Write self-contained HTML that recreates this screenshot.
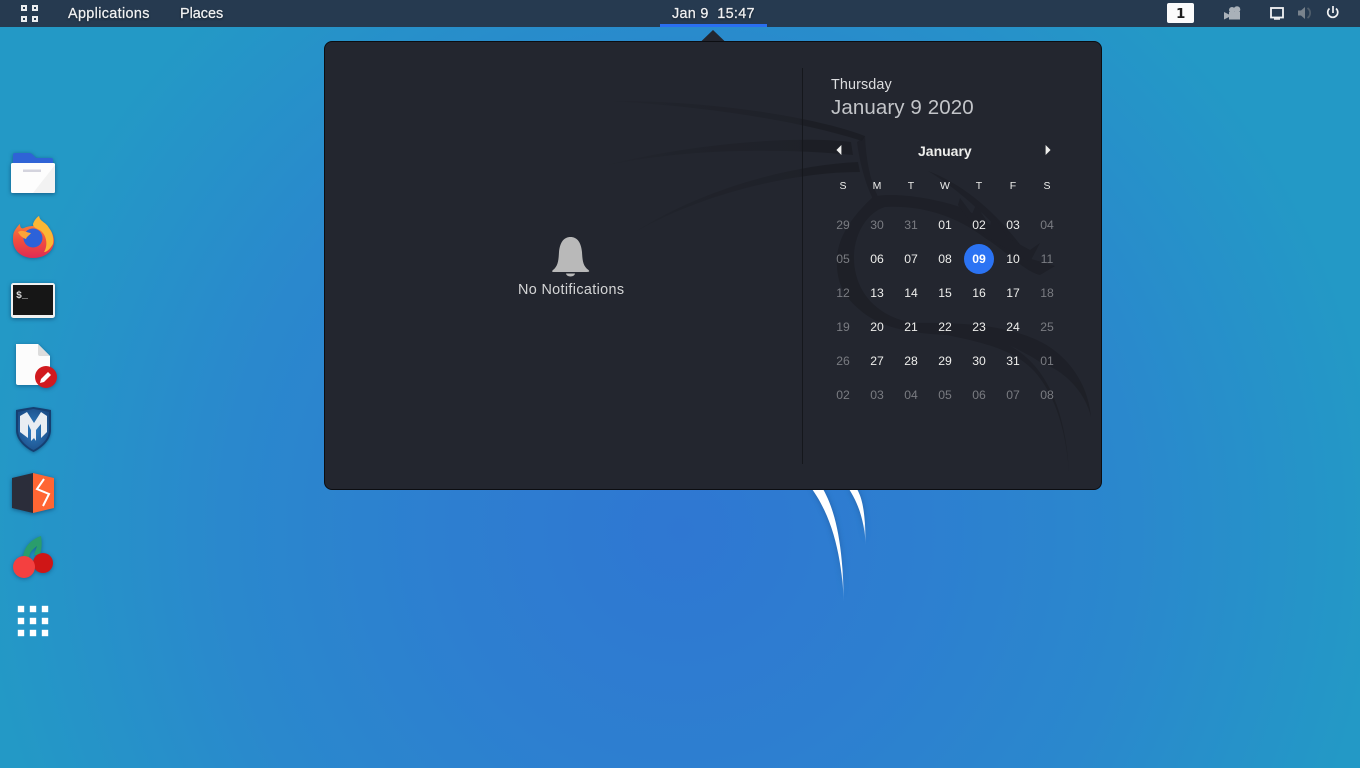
<!DOCTYPE html>
<html><head><meta charset="utf-8"><style>
html,body{margin:0;padding:0;width:1360px;height:768px;overflow:hidden}
body{position:relative;font-family:"Liberation Sans",sans-serif;background:radial-gradient(ellipse 700px 700px at 680px 530px,#2f77d2 0%,#2d7fd0 35%,#2a88cd 65%,#2399c6 100%) #2399c6}
.t{position:absolute;white-space:nowrap;line-height:1}
.c{position:absolute;transform:translate(-50%,-50%);font-size:12.2px;line-height:1;color:#eeeeec;white-space:nowrap}
.o{color:#7a7c82}
#bar{position:absolute;left:0;top:0;width:1360px;height:27px;background:#263a50}
.bt{color:#f0f1f2;font-size:14.4px;font-weight:400;text-shadow:0 1px 2px rgba(0,0,0,.6);-webkit-text-stroke:.25px #f0f1f2}
#panel{position:absolute;left:324px;top:41px;width:776px;height:447px;background:#23262f;border:1px solid #0c0d11;border-radius:8px;overflow:hidden}
svg{position:absolute;left:0;top:0;overflow:visible}
</style></head><body>

<svg width="1360" height="768" style="filter:drop-shadow(0 0 3px rgba(20,60,110,.4))">
<defs>
<linearGradient id="c1" gradientUnits="userSpaceOnUse" x1="0" y1="489" x2="0" y2="604"><stop offset="0" stop-color="#fff"/><stop offset=".72" stop-color="#fff"/><stop offset="1" stop-color="#fff" stop-opacity="0"/></linearGradient>
<linearGradient id="c2" gradientUnits="userSpaceOnUse" x1="0" y1="489" x2="0" y2="546"><stop offset="0" stop-color="#fff"/><stop offset=".6" stop-color="#fff"/><stop offset="1" stop-color="#fff" stop-opacity="0"/></linearGradient>
</defs>
<path d="M812 489H823C836 512 843 545 844 604C842 560 834 520 812 489Z" fill="url(#c1)"/>
<path d="M849 489H857C863 500 865 512 866 546C864 520 859 505 849 489Z" fill="url(#c2)"/>
</svg>

<div id="bar"></div>
<svg width="1360" height="27">
<g fill="none" stroke="#eceef0" stroke-width="2"><rect x="22" y="6" width="4" height="4"/><rect x="33" y="6" width="4" height="4"/><rect x="22" y="17" width="4" height="4"/><rect x="33" y="17" width="4" height="4"/></g>
<rect x="660" y="24" width="107" height="3" fill="#2a6ff0"/>
<rect x="1167" y="3" width="27" height="20" rx="2" fill="#fbfbfb"/>
<path d="M1224 12l5 2.500V12h11v7.500H1229V17l-5 2.500Z" fill="#a9b1b9"/><circle cx="1232" cy="10" r="3" fill="#a9b1b9"/><circle cx="1237" cy="9.500" r="3.300" fill="#a9b1b9"/>
<rect x="1271" y="8" width="12" height="9.500" fill="none" stroke="#f2f3f4" stroke-width="1.800"/><path d="M1274 19h6" stroke="#f2f3f4" stroke-width="1.500"/>
<path d="M1298 10.500h3l4-3.500v12l-4-3.500h-3Z" fill="#79838d"/><path d="M1307.500 8c3.500 2.500 3.500 7.500 0 10" fill="none" stroke="#4f5d6b" stroke-width="1.800"/>
<path d="M1329.500 8.500a5 5 0 1 0 6.500 0" fill="none" stroke="#f2f3f4" stroke-width="1.700"/><path d="M1333 6v7" stroke="#f2f3f4" stroke-width="1.700"/>
</svg>
<span class="t bt" style="left:68px;top:7px;letter-spacing:.35px">Applications</span>
<span class="t bt" style="left:180px;top:7px">Places</span>
<span class="t bt" style="left:672px;top:7px;letter-spacing:.3px">Jan 9&nbsp; 15:47</span>
<span class="t" style="left:1176px;top:7.500px;font-family:'DejaVu Sans',sans-serif;font-weight:700;font-size:13.500px;color:#1c1c1c">1</span>

<svg width="1360" height="60" style="left:0;top:0"><path d="M701 41.500L713 30L725 41.500Z" fill="#23262f"/></svg>
<div id="panel">
<svg width="776" height="447" style="left:-325px;top:-42px">
<defs>
<linearGradient id="w" gradientUnits="userSpaceOnUse" x1="600" y1="0" x2="866" y2="0"><stop offset="0" stop-color="#191b21" stop-opacity=".05"/><stop offset=".3" stop-color="#191b21" stop-opacity=".28"/><stop offset=".75" stop-color="#191b21" stop-opacity=".42"/><stop offset=".76" stop-color="#191b21" stop-opacity=".7"/><stop offset="1" stop-color="#191b21" stop-opacity=".7"/></linearGradient>
</defs>
<path d="M610 101C700 100 810 115 865 136L862 141C800 121 710 107 610 101Z" fill="url(#w)"/>
<path d="M600 167C680 145 790 135 851 142L853 155C780 148 680 148 600 167Z" fill="url(#w)"/>
<path d="M635 232C700 190 790 165 858 162L860 172C790 172 700 195 635 232Z" fill="url(#w)"/>
<g fill="#1b1d24" opacity=".62">
<path d="M865 136L857 142C860 165 866 185 873 199L878 197C870 180 866 160 865 136Z"/>
<path d="M873 197C890 192 930 197 960 207C985 218 1010 240 1028 258L1055 266L1040 275C1025 272 1005 250 985 238C955 215 920 205 885 207C868 212 855 232 854 255C853 285 870 315 913 323C960 322 1010 325 1043 343C1070 358 1088 385 1091 417C1086 395 1068 372 1040 362C1030 355 1010 345 997 340C1040 355 1065 400 1069 472C1066 430 1055 395 1035 372C1015 350 985 343 947 335C905 333 878 326 860 310C842 295 836 280 837 258C838 240 848 220 873 197Z"/>
<path d="M928 171C965 185 1000 215 1030 258L1020 250C990 220 960 190 928 171Z"/>
<path d="M958 205L960 198L972 214L976 205L990 226L992 214L1008 238L1030 250L1040 243L1030 262L1000 245L975 228Z"/>
</g>
<rect x="802" y="68" width="1" height="396" fill="#15171c"/>
</svg>
</div>

<svg width="1360" height="768">
<defs>
<linearGradient id="ff" x1="0" y1="0" x2="0" y2="1"><stop offset="0" stop-color="#fb9a3a"/><stop offset=".55" stop-color="#f4513c"/><stop offset="1" stop-color="#de2b55"/></linearGradient>
<radialGradient id="ms" cx=".5" cy=".5" r=".6"><stop offset="0" stop-color="#2f7fc4"/><stop offset="1" stop-color="#1b4c86"/></radialGradient>
</defs>
<path d="M553 270C558 266 558.500 261 559 252C560 242 564 237 570.500 237C577 237 581 242 582 252C582.500 261 583 266 588.500 270C590 271.500 589 272 587 272H554C552 272 551.500 271.500 553 270Z" fill="#b9b9b9"/>
<path d="M566 273.500h9a4.500 3 0 0 1-9 0Z" fill="#b9b9b9"/>
<path d="M841 146v8l-4-4Z" fill="#eeeeec" stroke="#eeeeec" stroke-width=".8"/>
<path d="M1046 146v8l4-4Z" fill="#eeeeec" stroke="#eeeeec" stroke-width=".8"/>
<circle cx="979" cy="259" r="15" fill="#2b73f3"/>

<!-- files -->
<g filter="drop-shadow(0 1px 2px rgba(0,30,70,.5))">
<path d="M13 163V155q0-2 2-2H29q2 0 3 1l4 4H51q2 0 2 2V163Z" fill="#2f63d6"/>
<rect x="11" y="163" width="44" height="30" rx="1.500" fill="#fdfdfd"/>
<path d="M55 165V191q0 2-2 2H33Z" fill="#f2f2f2"/>
<rect x="23" y="169.500" width="18" height="2.500" fill="#d4d4de"/>
</g>
<!-- firefox -->
<g filter="drop-shadow(0 1px 1.500px rgba(0,30,70,.35))">
<path d="M14 232C17 226 20 224 20 224C20 228 22 229 24 228C28 226 32 226 34 226C33 222 36 218 39 216C40 222 46 222 49 228C53 233 54 238 54 241C54 251 45 258 33 258C21 258 13 250 13 240C13 237 13 234 14 232Z" fill="url(#ff)"/>
<path d="M39 216C40 222 46 222 49 228C53 233 54 240 53 244C50 249 47 252 44 252C48 246 47 236 41 231C37 228 33 228 33 224C34 221 36 218 39 216Z" fill="#fbb734"/>
<circle cx="33" cy="238" r="9.500" fill="#2c62d9"/>
<path d="M18 232C23 229 27 233 31 233C29 236 27 236 26 239C23 238 20 236 18 232Z" fill="#fca43a"/>
</g>
<!-- terminal -->
<g filter="drop-shadow(0 1px 2px rgba(0,30,70,.5))">
<rect x="11" y="283" width="44" height="35" rx="2.500" fill="#f0f1f1"/>
<rect x="13" y="285" width="40" height="30" fill="#161616"/>
<text x="16" y="298" font-family="Liberation Mono,monospace" font-size="10" font-weight="700" fill="#d8d8d8">$_</text>
</g>
<!-- doc -->
<g filter="drop-shadow(0 1px 2px rgba(0,30,70,.4))">
<path d="M16 344H38L50 356V385H18q-2 0-2-2Z" fill="#fcfcfc"/>
<path d="M38 344L50 356H40q-2 0-2-2Z" fill="#dcdcdc"/>
<circle cx="46" cy="377" r="11" fill="#d11a1f"/>
<path d="M40 383l1-4 7-7 3 3-7 7Z" fill="#fff"/>
</g>
<!-- metasploit -->
<g filter="drop-shadow(0 1px 1.500px rgba(0,30,70,.4))">
<path d="M33.500 407C40 408 46 409 51 410V430C51 440 42 448 33.500 452C25 448 16 440 16 430V410C21 409 27 408 33.500 407Z" fill="#153f71"/>
<path d="M33.500 409C39 410 45 411 49 412V430C49 439 41 446 33.500 450C26 446 18 439 18 430V412C22 411 28 410 33.500 409Z" fill="url(#ms)"/>
<path d="M20 416L27 412L34 423L41 412L47 416V432L41 438V424L36 430V441L34 438L31 441V430L28 424V438L20 432Z" fill="#e9edf2"/>
</g>
<!-- burp -->
<g filter="drop-shadow(0 1px 2px rgba(0,30,70,.5))">
<path d="M12 478L33 473V513L12 508Z" fill="#2b2d3a"/>
<path d="M33 473L54 478V508L33 513Z" fill="#ff6633"/>
<path d="M44 479L37 489L49 494L43 506" fill="none" stroke="#fff" stroke-width="2"/>
</g>
<!-- cherry -->
<g filter="drop-shadow(0 1px 2px rgba(0,30,70,.4))">
<path d="M41 536C30 540 23 548 23 559L29 559C29 552 33 549 37 546L34 555L40 555C42 548 42 542 41 536Z" fill="#2a9d6c"/>
<circle cx="43" cy="563" r="10" fill="#cf1616"/>
<circle cx="24" cy="567" r="11" fill="#f44040"/>
</g>
<!-- grid -->
<g fill="#fff"><rect x="17.800" y="605.800" width="6.400" height="6.400"/><rect x="29.800" y="605.800" width="6.400" height="6.400"/><rect x="41.800" y="605.800" width="6.400" height="6.400"/><rect x="17.800" y="617.800" width="6.400" height="6.400"/><rect x="29.800" y="617.800" width="6.400" height="6.400"/><rect x="41.800" y="617.800" width="6.400" height="6.400"/><rect x="17.800" y="629.800" width="6.400" height="6.400"/><rect x="29.800" y="629.800" width="6.400" height="6.400"/><rect x="41.800" y="629.800" width="6.400" height="6.400"/></g>
</svg>

<span class="t" style="left:518px;top:283px;font-size:14.400px;color:#d4d5d6;letter-spacing:.35px">No Notifications</span>
<span class="t" style="left:831px;top:78px;font-size:14.400px;color:#dcdddf;letter-spacing:.1px">Thursday</span>
<span class="t" style="left:831px;top:98px;font-size:20.500px;color:#c3c5c9;letter-spacing:.1px">January 9 2020</span>
<span class="t" style="left:918px;top:144px;font-size:14px;font-weight:700;color:#eeeeec">January</span>

<span class="c" style="left:843px;top:186px;font-size:10.500px">S</span><span class="c" style="left:877px;top:186px;font-size:10.500px">M</span><span class="c" style="left:911px;top:186px;font-size:10.500px">T</span><span class="c" style="left:945px;top:186px;font-size:10.500px">W</span><span class="c" style="left:979px;top:186px;font-size:10.500px">T</span><span class="c" style="left:1013px;top:186px;font-size:10.500px">F</span><span class="c" style="left:1047px;top:186px;font-size:10.500px">S</span>

<span class="c o" style="left:843px;top:225px">29</span><span class="c o" style="left:877px;top:225px">30</span><span class="c o" style="left:911px;top:225px">31</span><span class="c" style="left:945px;top:225px">01</span><span class="c" style="left:979px;top:225px">02</span><span class="c" style="left:1013px;top:225px">03</span><span class="c o" style="left:1047px;top:225px">04</span>
<span class="c o" style="left:843px;top:259px">05</span><span class="c" style="left:877px;top:259px">06</span><span class="c" style="left:911px;top:259px">07</span><span class="c" style="left:945px;top:259px">08</span><span class="c" style="left:979px;top:259px;font-weight:700;color:#fff">09</span><span class="c" style="left:1013px;top:259px">10</span><span class="c o" style="left:1047px;top:259px">11</span>
<span class="c o" style="left:843px;top:293px">12</span><span class="c" style="left:877px;top:293px">13</span><span class="c" style="left:911px;top:293px">14</span><span class="c" style="left:945px;top:293px">15</span><span class="c" style="left:979px;top:293px">16</span><span class="c" style="left:1013px;top:293px">17</span><span class="c o" style="left:1047px;top:293px">18</span>
<span class="c o" style="left:843px;top:327px">19</span><span class="c" style="left:877px;top:327px">20</span><span class="c" style="left:911px;top:327px">21</span><span class="c" style="left:945px;top:327px">22</span><span class="c" style="left:979px;top:327px">23</span><span class="c" style="left:1013px;top:327px">24</span><span class="c o" style="left:1047px;top:327px">25</span>
<span class="c o" style="left:843px;top:361px">26</span><span class="c" style="left:877px;top:361px">27</span><span class="c" style="left:911px;top:361px">28</span><span class="c" style="left:945px;top:361px">29</span><span class="c" style="left:979px;top:361px">30</span><span class="c" style="left:1013px;top:361px">31</span><span class="c o" style="left:1047px;top:361px">01</span>
<span class="c o" style="left:843px;top:395px">02</span><span class="c o" style="left:877px;top:395px">03</span><span class="c o" style="left:911px;top:395px">04</span><span class="c o" style="left:945px;top:395px">05</span><span class="c o" style="left:979px;top:395px">06</span><span class="c o" style="left:1013px;top:395px">07</span><span class="c o" style="left:1047px;top:395px">08</span>
</body></html>
